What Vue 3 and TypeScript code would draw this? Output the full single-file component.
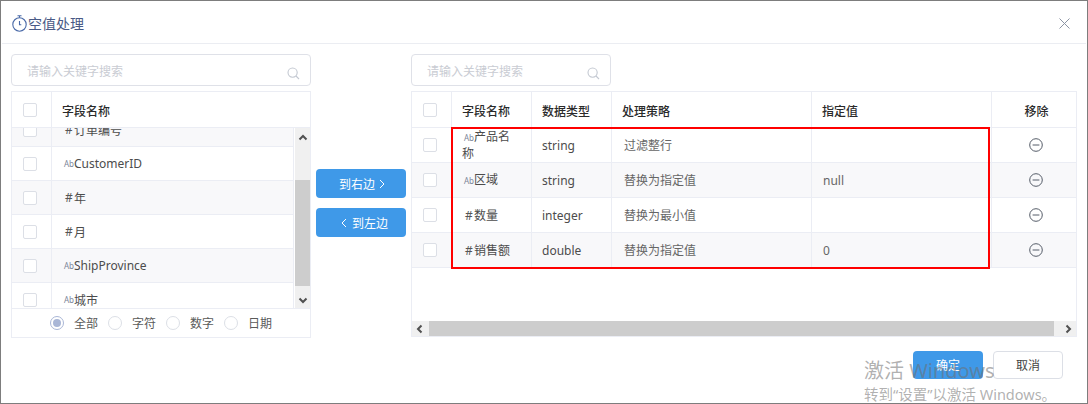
<script setup lang="ts">
interface LeftRow { kind: 'text' | 'num'; name: string }
interface RightRow { kind: 'text' | 'num'; name: string; type: string; strategy: string; value: string }

const leftRows: LeftRow[] = [
  { kind: 'num', name: '订单编号' },
  { kind: 'text', name: 'CustomerID' },
  { kind: 'num', name: '年' },
  { kind: 'num', name: '月' },
  { kind: 'text', name: 'ShipProvince' },
  { kind: 'text', name: '城市' },
]
const rightRows: RightRow[] = [
  { kind: 'text', name: '产品名称', type: 'string', strategy: '过滤整行', value: '' },
  { kind: 'text', name: '区域', type: 'string', strategy: '替换为指定值', value: 'null' },
  { kind: 'num', name: '数量', type: 'integer', strategy: '替换为最小值', value: '' },
  { kind: 'num', name: '销售额', type: 'double', strategy: '替换为指定值', value: '0' },
]
const radios = ['全部', '字符', '数字', '日期']
</script>

<template>
  <div class="dialog">
    <header class="head">
      <svg class="clock" width="15" height="17" viewBox="0 0 15 17" fill="none" stroke="#4a6aa8" stroke-width="1.1">
        <circle cx="7.5" cy="9.5" r="6.7" />
        <path d="M5.5 .7h4M7.5 .7v2M7.5 6v3.8h1.8" />
      </svg>
      <span class="title">空值处理</span>
      <svg class="close" width="11" height="11" viewBox="0 0 11 11" stroke="#8b93a3" stroke-width="1" fill="none">
        <path d="M.5.5l10 10M10.5.5l-10 10" />
      </svg>
    </header>

    <main class="body">
      <section class="left">
        <div class="search wide">
          <span class="placeholder">请输入关键字搜索</span>
          <svg class="lens" width="13" height="13" viewBox="0 0 13 13" fill="none" stroke="#c3c8d1" stroke-width="1.1">
            <circle cx="5.6" cy="5.6" r="4.6" /><path d="M9 9l3 3" />
          </svg>
        </div>
        <div class="lpanel">
          <div class="lhead">
            <div class="ccheck"><i class="box" /></div>
            <div class="lname th">字段名称</div>
          </div>
          <div class="lscroll">
            <div class="lview">
              <div class="linner">
                <div v-for="(r, i) in leftRows" :key="r.name" class="lrow" :class="{ odd: i % 2 === 0 }">
                  <div class="ccheck"><i class="box" /></div>
                  <div class="lname">
                    <span v-if="r.kind === 'text'" class="ab">Ab</span><span v-else class="hash">#</span>{{ r.name }}
                  </div>
                </div>
              </div>
            </div>
            <div class="vbar">
              <svg class="arrow" width="10" height="7" viewBox="0 0 10 7" fill="none" stroke="#505050" stroke-width="2"><path d="M1.5 5.5L5 2l3.5 3.5" /></svg>
              <div class="vtrack"><div class="vthumb" /></div>
              <svg class="arrow down" width="10" height="7" viewBox="0 0 10 7" fill="none" stroke="#505050" stroke-width="2"><path d="M1.5 1.5L5 5l3.5-3.5" /></svg>
            </div>
          </div>
          <div class="radios">
            <label v-for="(t, i) in radios" :key="t" class="radio">
              <i class="dot" :class="{ on: i === 0 }" /><span>{{ t }}</span>
            </label>
          </div>
        </div>
      </section>

      <section class="mid">
        <button class="btn move forward" type="button">到右边
          <svg width="6" height="10" viewBox="0 0 6 10" fill="none" stroke="#fff" stroke-width="1"><path d="M1 1l4 4-4 4" /></svg>
        </button>
        <button class="btn move back" type="button">
          <svg width="6" height="10" viewBox="0 0 6 10" fill="none" stroke="#fff" stroke-width="1"><path d="M5 1L1 5l4 4" /></svg>
          到左边
        </button>
      </section>

      <section class="right">
        <div class="search">
          <span class="placeholder">请输入关键字搜索</span>
          <svg class="lens" width="13" height="13" viewBox="0 0 13 13" fill="none" stroke="#c3c8d1" stroke-width="1.1">
            <circle cx="5.6" cy="5.6" r="4.6" /><path d="M9 9l3 3" />
          </svg>
        </div>
        <div class="rpanel">
          <div class="rtable">
            <div class="rrow rhead">
              <div class="ccheck"><i class="box" /></div>
              <div class="cell c-name th">字段名称</div>
              <div class="cell c-type th">数据类型</div>
              <div class="cell c-str th">处理策略</div>
              <div class="cell c-val th">指定值</div>
              <div class="cell c-del th">移除</div>
            </div>
            <div v-for="(r, i) in rightRows" :key="r.name" class="rrow" :class="{ odd: i % 2 === 1 }">
              <div class="ccheck"><i class="box" /></div>
              <div class="cell c-name field">
                <div><span v-if="r.kind === 'text'" class="ab">Ab</span><span v-else class="hash">#</span>{{ r.name }}</div>
              </div>
              <div class="cell c-type">{{ r.type }}</div>
              <div class="cell c-str muted">{{ r.strategy }}</div>
              <div class="cell c-val muted val">{{ r.value }}</div>
              <div class="cell c-del">
                <svg width="14" height="14" viewBox="0 0 14 14" fill="none" stroke="#555c68" stroke-width="1"><circle cx="7" cy="7" r="6.3" /><path d="M3.6 7h6.8" /></svg>
              </div>
            </div>
            <div class="redbox" />
          </div>
          <div class="hbar">
            <svg width="7" height="10" viewBox="0 0 7 10" fill="none" stroke="#505050" stroke-width="2"><path d="M5.5 1.5L2 5l3.5 3.5" /></svg>
            <div class="hthumb" />
            <svg width="7" height="10" viewBox="0 0 7 10" fill="none" stroke="#505050" stroke-width="2"><path d="M1.5 1.5L5 5 1.5 8.5" /></svg>
          </div>
        </div>
      </section>
    </main>

    <footer class="foot">
      <button class="btn ok" type="button">确定</button>
      <button class="btn cancel" type="button">取消</button>
    </footer>

    <div class="watermark">
      <div class="wm1">激活 Windows</div>
      <div class="wm2">转到“设置”以激活 Windows。</div>
    </div>
  </div>
</template>

<style>
html, body { margin: 0; background: #fff; }
</style>

<style scoped>
.dialog {
  position: relative;
  width: 1088px;
  height: 404px;
  box-sizing: border-box;
  border: 1px solid #7d7d7d;
  background: #fff;
  overflow: hidden;
  font-family: "Noto Sans", "Noto Sans CJK SC", sans-serif;
  font-size: 12px;
  color: #4c4c4c;
}
.head {
  height: 43px;
  box-sizing: border-box;
  margin: 0 1px;
  border-bottom: 1px solid #ebedf2;
  display: flex;
  align-items: center;
  padding: 3px 16px 0 10px;
  color: #4a5a86;
}
.clock { flex: none; margin-right: 1px; }
.title { font-size: 14px; flex: 1; line-height: 20px; }
.body {
  display: flex;
  padding: 10px 0 0 10px;
}
.left { width: 300px; }
.search {
  position: relative;
  width: 200px;
  height: 32px;
  box-sizing: border-box;
  border: 1px solid #dfe1e8;
  border-radius: 4px;
  display: flex;
  align-items: center;
  padding: 1px 0 0 15px;
}
.search.wide { width: 300px; }
.placeholder { color: #c9ccd3; font-size: 12px; }
.lens { position: absolute; right: 10px; top: 12px; }
.lpanel {
  margin-top: 5px;
  width: 300px;
  box-sizing: border-box;
  border: 1px solid #ebedf4;
}
.lhead { display: flex; height: 35px; border-bottom: 1px solid #ebedf4; }
.ccheck {
  flex: none;
  border-right: 1px solid #ebedf4;
  box-sizing: content-box;
  display: flex;
  align-items: center;
  padding-left: 11px;
  width: 28px;
}
.box {
  display: block;
  width: 12px;
  height: 12px;
  border: 1px solid #dcdfe6;
  border-radius: 2px;
  background: #fff;
}
.lname {
  flex: 1;
  padding-left: 10px;
  display: flex;
  align-items: center;
}
.th { font-weight: 500; color: #2a2a2a; font-size: 12px; padding-top: 2px; }
.lscroll { display: flex; height: 180px; }
.lview { flex: 1; min-width: 0; overflow: hidden; padding-right: 1px; }
.linner { margin-top: -15px; }
.lrow {
  display: flex;
  height: 33px;
  border-bottom: 1px solid #ebedf4;
  border-right: 1px solid #ebedf4;
}
.lrow.odd { background: #f8f8fa; }
.ab {
  display: inline-block;
  width: 9px;
  color: #7c8599;
  font-size: 8px;
  margin: 0 1px 0 2px;
}
.hash {
  display: inline-block;
  width: 10px;
  text-align: center;
  color: #555;
  font-size: 12px;
  margin-left: 2px;
}
.vbar {
  width: 15px;
  flex: none;
  background: #f0f0f0;
  display: flex;
  flex-direction: column;
  align-items: center;
}
.arrow { flex: none; margin: 6px 0 5px; }
.arrow.down { margin: 5px 0 4px; }
.vtrack { flex: 1; width: 100%; padding-top: 34px; box-sizing: border-box; }
.vthumb { height: 106px; width: 100%; background: #cdcdcd; }
.radios {
  height: 28px;
  border-top: 1px solid #ebedf4;
  display: flex;
  align-items: center;
  padding-left: 38px;
  gap: 10px;
}
.radio { display: flex; align-items: center; gap: 10px; font-size: 12px; color: #5a5a5a; }
.dot {
  display: block;
  width: 12px;
  height: 12px;
  border: 1px solid #dcdfe6;
  border-radius: 50%;
  position: relative;
}
.dot.on { border-color: #a9b6d6; }
.dot.on::after {
  content: "";
  position: absolute;
  inset: 2px;
  border-radius: 50%;
  background: #a9b6d6;
}
.mid {
  width: 100px;
  flex: none;
  display: flex;
  flex-direction: column;
  align-items: center;
  padding: 115px 0 0 0;
  gap: 10px;
}
.btn {
  font-family: inherit;
  font-size: 12px;
  border-radius: 4px;
  border: none;
  cursor: pointer;
}
.move {
  width: 90px;
  height: 29px;
  background: #3f99e8;
  color: #fff;
  display: flex;
  align-items: center;
  justify-content: center;
  gap: 4px;
  padding: 0;
}
.move.forward { padding-left: 2px; }
.move.back { gap: 5px; padding-left: 7px; }
.right { width: 666px; flex: none; }
.rpanel {
  margin-top: 5px;
  width: 666px;
  height: 246px;
  box-sizing: border-box;
  border: 1px solid #ebedf4;
  display: flex;
  flex-direction: column;
}
.rtable { flex: 1; position: relative; }
.rrow { display: flex; height: 34px; border-bottom: 1px solid #ebedf4; }
.rhead { height: 35px; }
.rrow.odd { background: #f8f8fa; }
.cell {
  box-sizing: border-box;
  display: flex;
  align-items: center;
  border-right: 1px solid #ebedf4;
  padding-left: 10px;
  flex: none;
  font-size: 12px;
}
.c-name { width: 80px; }
.c-type { width: 80px; }
.c-str { width: 200px; }
.c-val { width: 180px; }
.c-del { flex: 1; width: auto; justify-content: center; border-right: none; padding-left: 4px; }
.c-del.th { padding-left: 5px; }
.field { line-height: 16px; padding: 1px 10px 0 10px; }
.muted { padding-left: 12px; color: #666; }
.muted.val { padding-left: 11px; }
.redbox {
  position: absolute;
  left: 39px;
  top: 35px;
  width: 539px;
  height: 142px;
  box-sizing: border-box;
  border: 2px solid #f00;
  pointer-events: none;
}
.hbar {
  height: 15px;
  background: #f0f0f0;
  display: flex;
  align-items: center;
  justify-content: space-between;
  padding: 0 4px;
}
.hthumb { flex: 1; height: 100%; background: #cdcdcd; margin: 0 11px 0 6px; }
.foot {
  display: flex;
  justify-content: flex-end;
  gap: 10px;
  padding: 13px 24px 0 0;
}
.ok { width: 70px; height: 28px; background: #3f99e8; color: #fff; }
.cancel { width: 70px; height: 28px; background: #fff; border: 1px solid #dcdfe6; color: #444; }
.watermark {
  position: absolute;
  left: 863px;
  top: 356px;
  pointer-events: none;
  color: rgba(110, 110, 110, 0.55);
  white-space: nowrap;
}
.wm1 { font-size: 20px; line-height: 28px; }
.wm2 { font-size: 14.5px; line-height: 20px; margin-top: -1px; }
</style>
